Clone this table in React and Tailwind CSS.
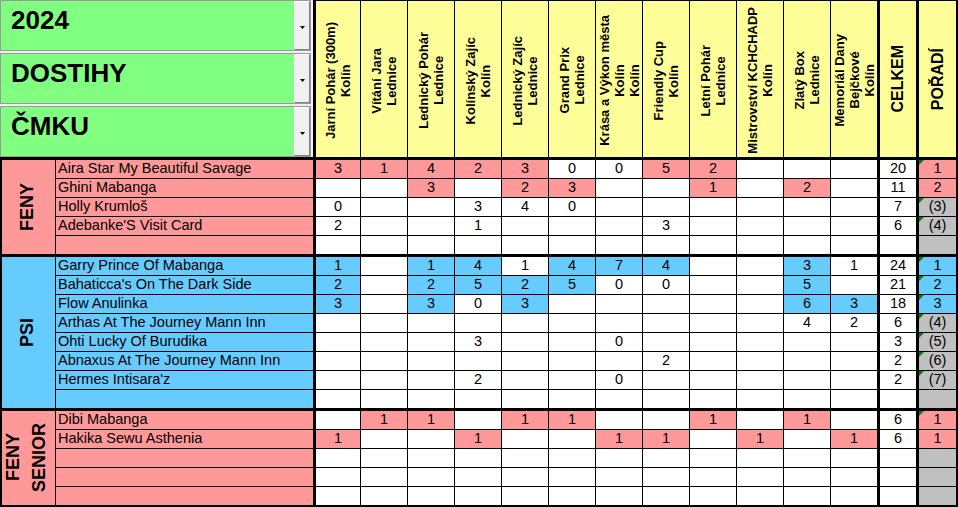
import React from "react";

const EVENTS = [
  ["Jarní Pohár (300m)", "Kolín"],
  ["Vítání Jara", "Lednice"],
  ["Lednický Pohár", "Lednice"],
  ["Kolínský Zajíc", "Kolín"],
  ["Lednický Zajíc", "Lednice"],
  ["Grand Prix", "Lednice"],
  ["Krása a Výkon města", "Kolín", "Kolín"],
  ["Friendly Cup", "Kolín"],
  ["Letní Pohár", "Lednice"],
  ["Mistrovství KCHCHADP", "Kolín"],
  ["Zlatý Box", "Lednice"],
  ["Memoriál Dany", "Bejčkové", "Kolín"],
];

const E = ["", "", "", "", "", "", "", "", "", "", "", ""];

const GROUPS = [
  {
    label: ["FENY"],
    bg: "bg-[#ff9999]",
    rows: [
      { n: "Aira Star My Beautiful Savage", s: ["3p", "1p", "4p", "2p", "3p", "0", "0", "5p", "2p", "", "", ""], t: "20", r: "1p", tri: true },
      { n: "Ghini Mabanga", s: ["", "", "3p", "", "2p", "3p", "", "", "1p", "", "2p", ""], t: "11", r: "2p" },
      { n: "Holly Krumloš", s: ["0", "", "", "3", "4", "0", "", "", "", "", "", ""], t: "7", r: "(3)", tri: true },
      { n: "Adebanke'S Visit Card", s: ["2", "", "", "1", "", "", "", "3", "", "", "", ""], t: "6", r: "(4)", tri: true },
      { n: "", s: E, t: "", r: "" },
    ],
  },
  {
    label: ["PSI"],
    bg: "bg-[#66ccff]",
    rows: [
      { n: "Garry Prince Of Mabanga", s: ["1b", "", "1b", "4b", "1", "4b", "7b", "4b", "", "", "3b", "1"], t: "24", r: "1b", tri: true },
      { n: "Bahaticca's On The Dark Side", s: ["2b", "", "2b", "5b", "2b", "5b", "0", "0", "", "", "5b", ""], t: "21", r: "2b", tri: true },
      { n: "Flow Anulinka", s: ["3b", "", "3b", "0", "3b", "", "", "", "", "", "6b", "3b"], t: "18", r: "3b", tri: true },
      { n: "Arthas At The Journey Mann Inn", s: ["", "", "", "", "", "", "", "", "", "", "4", "2"], t: "6", r: "(4)", tri: true },
      { n: "Ohti Lucky Of Burudika", s: ["", "", "", "3", "", "", "0", "", "", "", "", ""], t: "3", r: "(5)", tri: true },
      { n: "Abnaxus At The Journey Mann Inn", s: ["", "", "", "", "", "", "", "2", "", "", "", ""], t: "2", r: "(6)", tri: true },
      { n: "Hermes Intisara'z", s: ["", "", "", "2", "", "", "0", "", "", "", "", ""], t: "2", r: "(7)", tri: true },
      { n: "", s: E, t: "", r: "" },
    ],
  },
  {
    label: ["FENY", "SENIOR"],
    bg: "bg-[#ff9999]",
    rows: [
      { n: "Dibi Mabanga", s: ["", "1p", "1p", "", "1p", "1p", "", "", "1p", "", "1p", ""], t: "6", r: "1p", tri: true },
      { n: "Hakika Sewu Asthenia", s: ["1p", "", "", "1p", "", "", "1p", "1p", "", "1p", "", "1p"], t: "6", r: "1p" },
      { n: "", s: E, t: "", r: "" },
      { n: "", s: E, t: "", r: "" },
      { n: "", s: E, t: "", r: "" },
    ],
  },
];

const colClass = (i) => {
  if (i === 0) return "w-[48px] border-l-[3px] border-r";
  if (i === 11) return "w-[46px]";
  return "w-[47px] border-r";
};

const fill = (v) => {
  if (v.endsWith("p")) return { text: v.slice(0, -1), bg: "bg-[#ff9999]" };
  if (v.endsWith("b")) return { text: v.slice(0, -1), bg: "bg-[#66ccff]" };
  return { text: v, bg: "bg-white" };
};

const rankFill = (v) => {
  if (v.endsWith("p")) return { text: v.slice(0, -1), bg: "bg-[#ff9999]" };
  if (v.endsWith("b")) return { text: v.slice(0, -1), bg: "bg-[#66ccff]" };
  return { text: v, bg: "bg-[#c0c0c0]" };
};

const Arrow = () => (
  <svg width="5" height="3" viewBox="0 0 5 3">
    <polygon points="0,0 5,0 2.5,3" fill="#000" />
  </svg>
);

const Combo = ({ value }) => (
  <div className="flex h-[51px] border border-[#9a9a9a] bg-[#80ff80]">
    <div className="flex-1 pl-[10px] pt-[4px] text-[26px] font-bold leading-[30px] text-black">
      {value}
    </div>
    <div className="flex w-[16px] items-center justify-center border border-t-white border-l-white border-r-[#808080] border-b-[#808080] bg-[#f0f0f0] pt-[3px]">
      <Arrow />
    </div>
  </div>
);

const Header = () => (
  <div className="flex h-[160px] border-b-[3px] border-black">
    <div className="flex w-[313px] flex-col gap-[2px] bg-[#f0f0f0] pr-[2px]">
      <Combo value="2024" />
      <Combo value="DOSTIHY" />
      <Combo value="ČMKU" />
    </div>
    {EVENTS.map((ev, i) => (
      <div
        key={i}
        className={`${colClass(i)} flex items-center justify-center overflow-visible border-t border-black bg-[#ffff99]`}
      >
        <div className="rotate-180 whitespace-nowrap pb-[3px] text-center text-[13px] font-bold leading-[15px] [writing-mode:vertical-rl]">
          {ev.map((l, k) => (
            <div key={k}>{l}</div>
          ))}
        </div>
      </div>
    ))}
    <div className="flex w-[39px] items-center justify-center border-l-[3px] border-t border-black bg-[#ffff99]">
      <div className="rotate-180 text-[16px] font-bold [writing-mode:vertical-rl]">CELKEM</div>
    </div>
    <div className="flex w-[42px] items-center justify-center border-l-[3px] border-r-2 border-t border-black bg-[#ffff99]">
      <div className="rotate-180 text-[16px] font-bold [writing-mode:vertical-rl]">POŘADÍ</div>
    </div>
  </div>
);

const Triangle = () => (
  <svg className="absolute left-0 top-0" width="5" height="5" viewBox="0 0 5 5">
    <polygon points="0,0 5,0 0,5" fill="#008000" />
  </svg>
);

const Row = ({ row, bg, last }) => {
  const rank = rankFill(row.r);
  return (
    <div className={`flex ${last ? "h-[18px]" : "h-[19px] border-b border-black"}`}>
      <div className={`w-[257px] ${bg} flex items-center whitespace-nowrap pl-[2px]`}>{row.n}</div>
      {row.s.map((v, i) => {
        const c = fill(v);
        return (
          <div key={i} className={`${colClass(i)} ${c.bg} flex items-center justify-center border-black`}>
            {c.text}
          </div>
        );
      })}
      <div className="flex w-[39px] items-center justify-center border-l-[3px] border-black bg-white">{row.t}</div>
      <div className={`relative flex w-[42px] items-center justify-center border-l-[3px] border-r-2 border-black ${rank.bg}`}>
        {row.tri && <Triangle />}
        {rank.text}
      </div>
    </div>
  );
};

const Group = ({ group, last }) => (
  <div className={`flex border-black ${last ? "border-b-2" : "border-b-[3px]"}`}>
    <div
      className={`flex w-[56px] items-center justify-center border-l-2 border-r border-black ${group.bg} ${
        group.label.length > 1 ? "pr-[6px]" : "pr-[3px]"
      }`}
    >
      <div
        className={`rotate-180 whitespace-nowrap text-center text-[18px] font-bold [writing-mode:vertical-rl] ${
          group.label.length > 1 ? "leading-[26px]" : ""
        }`}
      >
        {group.label.map((l, k) => (
          <div key={k}>{l}</div>
        ))}
      </div>
    </div>
    <div className="flex flex-col">
      {group.rows.map((r, i) => (
        <Row key={i} row={r} bg={group.bg} last={i === group.rows.length - 1} />
      ))}
    </div>
  </div>
);

export default function App() {
  return (
    <div className="h-[507px] w-[958px] overflow-hidden bg-white font-['Liberation_Sans',Arial,sans-serif] text-[14.5px] text-black">
      <Header />
      {GROUPS.map((g, i) => (
        <Group key={i} group={g} last={i === GROUPS.length - 1} />
      ))}
    </div>
  );
}
